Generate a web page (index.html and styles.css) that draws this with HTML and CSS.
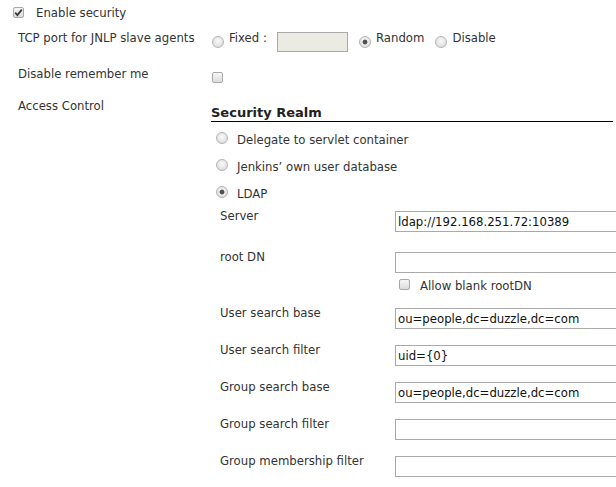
FILE: index.html
```html
<!DOCTYPE html>
<html>
<head>
<meta charset="utf-8">
<link rel="stylesheet" href="styles.css">
</head>
<body>
<div class="page">
  <div class="enable">
    <span class="cb checked"><svg viewBox="0 0 11 11" width="11" height="11"><path d="M2.2 5.6 L4.4 8 L8.8 2.6" fill="none" stroke="#3a3a3a" stroke-width="1.8"/></svg></span>
    <span class="enable-text">Enable security</span>
  </div>

  <div class="setting tcp">
    <div class="name">TCP port for JNLP slave agents</div>
    <div class="value">
      <span class="radio"></span>
      <span class="opt fixed">Fixed :</span>
      <span class="field disabled"></span>
      <span class="radio on gap"></span>
      <span class="opt">Random</span>
      <span class="radio gap"></span>
      <span class="opt">Disable</span>
    </div>
  </div>

  <div class="setting remember">
    <div class="name">Disable remember me</div>
    <div class="value"><span class="cb cb-remember"></span></div>
  </div>

  <div class="setting access">
    <div class="name">Access Control</div>
    <div class="value realm">
      <div class="section-header">Security Realm</div>
      <div class="choice first"><span class="radio"></span><span class="opt">Delegate to servlet container</span></div>
      <div class="choice"><span class="radio"></span><span class="opt">Jenkins’ own user database</span></div>
      <div class="choice"><span class="radio on"></span><span class="opt">LDAP</span></div>

      <div class="sub server">
        <div class="sub-name">Server</div>
        <div class="field">ldap://192.168.251.72:10389</div>
      </div>
      <div class="sub rootdn">
        <div class="sub-name">root DN</div>
        <div class="field"></div>
      </div>
      <div class="allow">
        <span class="cb"></span><span class="opt">Allow blank rootDN</span>
      </div>
      <div class="sub usb">
        <div class="sub-name">User search base</div>
        <div class="field">ou=people,dc=duzzle,dc=com</div>
      </div>
      <div class="sub">
        <div class="sub-name">User search filter</div>
        <div class="field">uid={0}</div>
      </div>
      <div class="sub">
        <div class="sub-name">Group search base</div>
        <div class="field">ou=people,dc=duzzle,dc=com</div>
      </div>
      <div class="sub">
        <div class="sub-name">Group search filter</div>
        <div class="field"></div>
      </div>
      <div class="sub">
        <div class="sub-name">Group membership filter</div>
        <div class="field"></div>
      </div>
    </div>
  </div>
</div>
</body>
</html>
```

FILE: styles.css
```css
html, body {
  margin: 0;
  padding: 0;
  overflow: hidden;
  background: #fff;
}

body {
  width: 616px;
  height: 487px;
  font-family: "DejaVu Sans Condensed", "DejaVu Sans", Verdana, sans-serif;
  font-size: 13px;
  line-height: 16px;
  color: #333;
}

.page {
  padding-top: 5px;
}

/* checkbox */
.cb {
  display: inline-block;
  box-sizing: border-box;
  width: 11px;
  height: 11px;
  border: 1px solid #a8a8a8;
  border-radius: 2px;
  background: linear-gradient(#f6f6f6, #dcdcdc);
  flex: none;
  position: relative;
}
.cb svg {
  position: absolute;
  left: -1px;
  top: -1px;
}

/* radio */
.radio {
  display: inline-block;
  box-sizing: border-box;
  width: 12px;
  height: 12px;
  border: 1px solid #b4b4b4;
  border-radius: 50%;
  background: radial-gradient(circle at 50% 40%, #fafafa 0, #e6e6e6 55%, #d4d4d4 100%);
  flex: none;
}
.radio.on {
  background:
    radial-gradient(circle, #505050 0, #505050 2px, rgba(80,80,80,0) 2.8px),
    radial-gradient(circle at 50% 40%, #fafafa 0, #e6e6e6 55%, #d4d4d4 100%);
}

.opt {
  white-space: nowrap;
}

/* field */
.field {
  box-sizing: border-box;
  height: 21px;
  border: 1px solid #a9a9a9;
  background: #fff;
  color: #111;
  padding: 1px 0 0 2px;
  line-height: 17px;
  white-space: nowrap;
  flex: none;
}
.field.disabled {
  width: 71px;
  height: 20px;
  background: #ebebe4;
}

/* enable row */
.enable {
  display: flex;
  align-items: flex-start;
  height: 16px;
  padding-left: 13px;
}
.enable .cb {
  margin-top: 2px;
}
.enable-text {
  margin-left: 12px;
}

/* generic setting row */
.setting {
  display: flex;
  align-items: flex-start;
}
.setting .name {
  box-sizing: border-box;
  width: 211px;
  padding-left: 18px;
  flex: none;
  white-space: nowrap;
}
.setting .value {
  display: flex;
  align-items: flex-start;
}

.tcp {
  margin-top: 9px;
  height: 22px;
}
.tcp .radio {
  margin-top: 6px;
  margin-left: 1px;
}
.tcp .radio.gap {
  margin-left: 11px;
}
.tcp .opt {
  margin-left: 5px;
}
.tcp .fixed {
  width: 48px;
  flex: none;
}
.tcp .field {
  margin-top: 2px;
}

.remember {
  margin-top: 14px;
  height: 17px;
}
.cb-remember {
  margin-top: 6px;
  margin-left: 1px;
}

.access {
  margin-top: 15px;
}

.setting .realm {
  flex-direction: column;
  align-items: stretch;
  width: 402px;
}

.section-header {
  margin-top: 7px;
  font-family: "DejaVu Sans", Verdana, sans-serif;
  font-weight: bold;
  color: #222;
  border-bottom: 1px solid #000;
  height: 16px;
}

.choice {
  display: flex;
  align-items: flex-start;
  height: 16px;
  margin-top: 11px;
  padding-left: 5px;
}
.choice.first {
  margin-top: 10px;
}
.choice .opt {
  margin-left: 9px;
}

.sub {
  display: flex;
  align-items: flex-start;
  height: 24px;
  margin-top: 13px;
  padding-left: 9px;
}
.sub .sub-name {
  width: 175px;
  flex: none;
  white-space: nowrap;
}
.sub .field {
  margin-top: 3px;
  width: 300px;
}
.sub.server {
  margin-top: 6px;
}
.sub.rootdn {
  margin-top: 17px;
}
.sub.usb {
  margin-top: 11px;
}

.allow {
  display: flex;
  align-items: flex-start;
  height: 16px;
  margin-top: 5px;
  padding-left: 188px;
}
.allow .cb {
  margin-top: 1px;
}
.allow .opt {
  margin-left: 10px;
}
```
